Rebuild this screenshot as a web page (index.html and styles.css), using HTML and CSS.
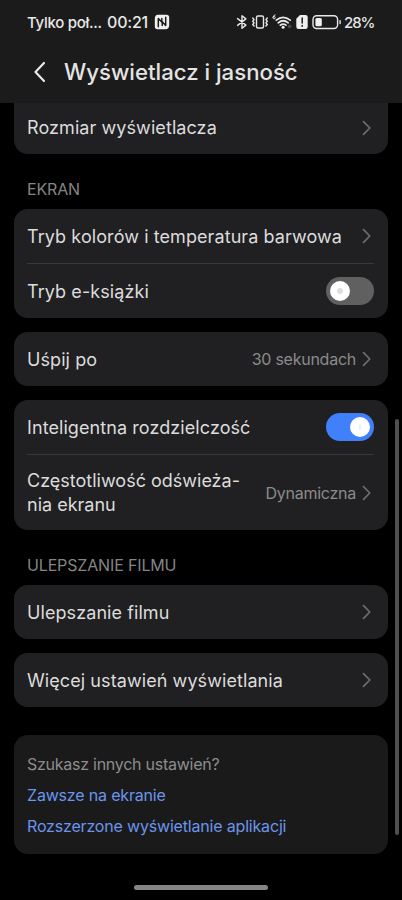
FILE: index.html
```html
<!DOCTYPE html>
<html lang="pl">
<head>
<meta charset="utf-8">
<title>Wyświetlacz i jasność</title>
<link rel="stylesheet" href="styles.css">
</head>
<body>
<svg class="defs" aria-hidden="true"><symbol id="chevron" viewBox="0 0 10 16"><path d="M1.5 1.600 7.800 8l-6.300 6.400"/></symbol></svg>
<div class="screen">
  <header class="top">
    <div class="status">
      <span class="carrier">Tylko poł...</span>
      <span class="clock">00:21</span>
      <svg class="nfc" viewBox="0 0 16 16"><path class="fill" d="M4 .8h8.500Q15.200.8 15.200 3.500V11q0 4.200-4 4.200H3.500Q.8 15.200.8 12.500V5Q.8.8 4 .8Z"/><path class="cut" d="M4.300 12.800V4.500l3.900 4.100v2.900M7.800 4.500v2.700l3.900 4.200V3.200"/></svg>
      <div class="indicators">
        <svg class="bluetooth" viewBox="0 0 12 16"><path d="m1.600 4.600 8.300 6.500L6 14.300V1.700l3.900 3.200-8.300 6.500"/></svg>
        <svg class="vibrate" viewBox="0 0 18 16"><rect x="5.500" y="2" width="7" height="12" rx="1.500"/><path d="M1.700 4l1.400 1.600L1.700 7.300l1.400 1.600-1.400 1.600 1.400 1.500M16.300 4l-1.400 1.600 1.400 1.700-1.400 1.600 1.400 1.600-1.400 1.500"/></svg>
        <svg class="wifi" viewBox="0 0 20 16"><path d="M4.300 6.200Q11 .4 18.200 6.200M6.200 8.800q5-4.100 10 0M8.300 11.200q2.900-2.200 5.700 0"/><circle class="fill" cx="11.100" cy="13.300" r="1.500"/><path class="six" d="M3.200.8Q1 1.300 1 3.500q0 1.300 1.100 1.300t1.100-1.200-1.100-1.200T1 3.500"/><circle class="dim" cx="17.600" cy="12.300" r="1.900"/></svg>
        <svg class="sim" viewBox="0 0 12 16"><path class="fill" d="M4 1h5.500Q11.700 1 11.700 3.200v9.600Q11.700 15 9.500 15h-7Q.3 15 .3 12.800V4.700Z"/><path class="cut" d="M6.200 3.900v5.200M6.200 11.600v.6"/></svg>
        <svg class="battery" viewBox="0 0 30 16"><rect x="1" y="1.700" width="24.600" height="12.800" rx="3.700"/><rect class="fill" x="3.400" y="4" width="6.400" height="8.200" rx="1.500"/><path d="M28.100 6.700v2.800"/></svg>
        <span class="percent">28%</span>
      </div>
    </div>
    <div class="titlebar">
      <svg class="back" viewBox="0 0 14 22"><path d="M11 2 2.500 11 11 20"/></svg>
      <h1>Wyświetlacz i jasność</h1>
    </div>
  </header>

  <main>
    <section class="card card-cut">
      <div class="row"><span class="label">Rozmiar wyświetlacza</span><svg class="chev"><use href="#chevron"/></svg></div>
    </section>
    <h2>EKRAN</h2>
    <section class="card">
      <div class="row"><span class="label">Tryb kolorów i temperatura barwowa</span><svg class="chev"><use href="#chevron"/></svg></div>
      <div class="row divided"><span class="label">Tryb e-książki</span><span class="switch"><i></i></span></div>
    </section>
    <section class="card">
      <div class="row"><span class="label">Uśpij po</span><span class="value">30 sekundach</span><svg class="chev"><use href="#chevron"/></svg></div>
    </section>
    <section class="card last">
      <div class="row"><span class="label">Inteligentna rozdzielczość</span><span class="switch on"><i></i></span></div>
      <div class="row tall divided"><span class="label wrap">Częstotliwość odświeża-<br>nia ekranu</span><span class="value">Dynamiczna</span><svg class="chev"><use href="#chevron"/></svg></div>
    </section>
    <h2>ULEPSZANIE FILMU</h2>
    <section class="card">
      <div class="row"><span class="label">Ulepszanie filmu</span><svg class="chev"><use href="#chevron"/></svg></div>
    </section>
    <section class="card">
      <div class="row"><span class="label">Więcej ustawień wyświetlania</span><svg class="chev"><use href="#chevron"/></svg></div>
    </section>
    <section class="card more">
      <p>Szukasz innych ustawień?</p>
      <a>Zawsze na ekranie</a>
      <a>Rozszerzone wyświetlanie aplikacji</a>
    </section>
  </main>
  <div class="scrollbar"></div>
  <div class="home"></div>
</div>
</body>
</html>
```
FILE: styles.css
```css
* { box-sizing: border-box; margin: 0; padding: 0; }
body { background: #000; }
.defs { display: none; }
.screen {
  position: relative;
  width: 402px;
  height: 900px;
  overflow: hidden;
  background: #000;
  color: #dcdcdc;
  font-family: Inter, "Noto Sans", sans-serif;
  white-space: nowrap;
}
svg { display: block; flex: none; fill: none; stroke: #e8e8e8; stroke-width: 1.4; stroke-linecap: round; stroke-linejoin: round; }
.fill { fill: #f0f0f0; stroke: none; }
.cut { stroke: #1b1b1b; stroke-width: 1.5; }

.top { height: 103px; background: #1b1b1b; }
.status { display: flex; align-items: center; height: 44px; padding: 0 27px; color: #e8e8e8; font-weight: 500; }
.carrier { width: 80px; font-size: 15px; letter-spacing: -.28px; }
.clock { width: 47px; font-size: 16px; letter-spacing: -.2px; }
.nfc { width: 16px; height: 16px; }
.indicators { display: flex; align-items: center; margin-left: auto; }
.bluetooth { width: 12px; height: 16px; }
.vibrate { width: 18px; height: 16px; margin-left: 3px; }
.wifi { width: 20px; height: 16px; margin-left: 3px; }
.wifi path { stroke-width: 1.7; }
.wifi .six { stroke-width: .9; }
.dim { fill: #484848; stroke: none; }
.sim { width: 12px; height: 16px; margin-left: 4px; }
.battery { width: 30px; height: 16px; margin-left: 4px; }
.percent { width: 31px; margin-left: 2px; font-size: 15px; letter-spacing: -1.1px; }

.titlebar { display: flex; align-items: center; height: 56px; padding-left: 33px; }
.back { width: 14px; height: 22px; stroke-width: 2.200; }
h1 { margin-left: 17px; font-size: 22.200px; font-weight: 500; line-height: 28px; color: #e4e4e4; }

main { padding: 0 14px; }
.card { margin-bottom: 14px; padding: 0 14px 0 13px; border-radius: 14px; background: #202022; }
.card-cut { height: 51px; margin-bottom: 0; border-radius: 0 0 14px 14px; }
.row { display: flex; align-items: center; height: 54px; font-size: 18px; line-height: 24px; }
.card-cut .row { height: 49px; }
.divided { height: 55px; border-top: 1px solid #38383a; }
.tall { height: 76px; }
.last { margin-bottom: 0; }
.label { padding-top: 2px; letter-spacing: .08px; }
.card-cut .label { padding-top: 0; }
.wrap { padding-top: 0; letter-spacing: 0; }
.chev { width: 10px; height: 16px; margin: 0 2px 0 auto; stroke: #6d6d6f; stroke-width: 1.700; }
.value { margin-left: auto; font-size: 16px; letter-spacing: -.25px; color: #8b8b8c; }
.value + .chev { margin-left: 6px; }
h2 { height: 55px; padding: 25px 13px 0; font-size: 16px; font-weight: 400; line-height: 20px; letter-spacing: -.15px; color: #858585; }

.switch { display: flex; width: 48px; height: 28px; margin-left: auto; padding: 4px; border-radius: 14px; background: #606060; }
.switch i { width: 20px; height: 20px; border: 7px solid #fff; border-radius: 50%; background: #dedede; }
.switch.on { justify-content: flex-end; background: #4080fa; }
.switch.on i { background: #e2edff; border-width: 7px 9px; }

.more { height: 119px; margin-top: 28px; padding-top: 14px; background: #1a1a1b; font-size: 16px; line-height: 31px; letter-spacing: -.26px; }
.more p { color: #8d8d8d; }
.more a { display: block; color: #6b95ec; letter-spacing: -.18px; }

.scrollbar { position: absolute; left: 395px; top: 419px; width: 4px; height: 416px; border-radius: 2px; background: #505050; }
.home { position: absolute; left: 134px; top: 885px; width: 134px; height: 5px; border-radius: 3px; background: #858585; }
```
